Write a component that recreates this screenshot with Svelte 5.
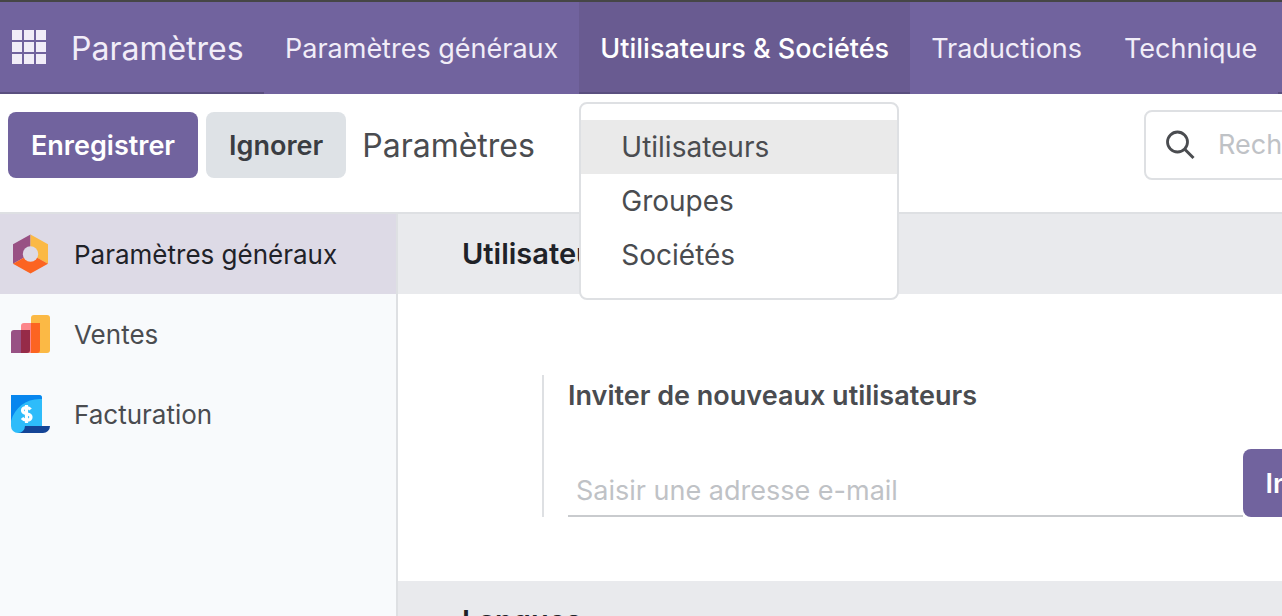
<script lang="ts">
  const menus = ["Paramètres généraux", "Utilisateurs & Sociétés", "Traductions", "Technique"];
  const entries = ["Utilisateurs", "Groupes", "Sociétés"];
  const tabs = [
    { id: "general", label: "Paramètres généraux" },
    { id: "sales", label: "Ventes" },
    { id: "invoicing", label: "Facturation" }
  ];

  let openMenu = $state("Utilisateurs & Sociétés");
  let hovered = $state("Utilisateurs");
  let activeTab = $state("general");
  let search = $state("");
  let email = $state("");

  const toggle = (menu: string) => {
    openMenu = openMenu === menu ? "" : menu;
  };
</script>

<div class="app">
  <header class="navbar">
    <div class="brand">
      <button class="apps" aria-label="Applications">
        <svg width="34" height="34" viewBox="0 0 34 34" fill="currentColor">
          {#each [0, 12, 24] as y}
            {#each [0, 12, 24] as x}
              <rect {x} {y} width="10" height="10" />
            {/each}
          {/each}
        </svg>
      </button>
      <a class="title" href="#settings">Paramètres</a>
    </div>
    {#each menus as menu}
      <div class="menu">
        <button class="menu-button" class:open={openMenu === menu} onclick={() => toggle(menu)}>{menu}</button>
        {#if openMenu === menu && menu === "Utilisateurs & Sociétés"}
          <div class="dropdown">
            {#each entries as entry}
              <a href="#{entry}" class="entry" class:hovered={hovered === entry} onmouseenter={() => (hovered = entry)}>{entry}</a>
            {/each}
          </div>
        {/if}
      </div>
    {/each}
    <div class="systray"></div>
  </header>

  <div class="control-panel">
    <button class="btn primary">Enregistrer</button>
    <button class="btn secondary">Ignorer</button>
    <h1>Paramètres</h1>
    <div class="search">
      <svg width="30" height="30" viewBox="0 0 30 30" fill="none" stroke="#4a4c50">
        <circle cx="11.500" cy="12" r="10" stroke-width="2.800" />
        <path d="M18.500 19L27.500 28" stroke-width="3" />
      </svg>
      <input type="text" placeholder="Recherche..." aria-label="Recherche" bind:value={search} />
    </div>
  </div>

  <div class="content">
    <nav class="sidebar">
      {#each tabs as tab}
        <button class="tab" class:active={activeTab === tab.id} onclick={() => (activeTab = tab.id)}>
          <svg width="40" height="40" viewBox="0 0 40 40">
            {#if tab.id === "general"}
              <path d="M20.500 .5L3 10.200V29.700L20.500 20Z" fill="#985184" />
              <path d="M20.500 .5L38 10.200V29.700L20.500 20Z" fill="#fbb945" />
              <path d="M3 29.700L20.500 20L38 29.700L20.500 39.500Z" fill="#fc6421" />
              <circle cx="20.500" cy="20" r="7.700" fill="#dddae6" />
            {:else if tab.id === "sales"}
              <path d="M21 4a3 3 0 0 1 3-3h13a3 3 0 0 1 3 3v32a3 3 0 0 1-3 3H21Z" fill="#fbb945" />
              <path d="M11 12a3 3 0 0 1 3-3h8v30H11Z" fill="#fc868b" />
              <path d="M21 9h9v27a3 3 0 0 1-3 3h-6Z" fill="#fc6421" />
              <path d="M1 19a3 3 0 0 1 3-3h8v23H1Z" fill="#985184" />
              <path d="M11 16h9v20a3 3 0 0 1-3 3h-6Z" fill="#962b48" />
            {:else}
              <path d="M1 1h28a3 3 0 0 1 3 3v28H15v7H8a7 7 0 0 1-7-7Z" fill="#2ebcfa" />
              <path d="M1 1h28a3 3 0 0 1 3 3v1C17 4 5 13 1 27Z" fill="#0886ee" />
              <path d="M15 32h25a7 7 0 0 1-7 7H8a7 7 0 0 0 7-7Z" fill="#144496" />
              <path
                d="M20.500 15.500c-1-1.500-2.300-2-4-2c-2.700 0-4 1.200-4 3c0 4.500 8.500 2 8.500 6.500c0 2-1.500 3.200-4.300 3.200c-2 0-3.500-.7-4.700-2.200M16.500 11v18"
                fill="none"
                stroke="#fff"
                stroke-width="3.200"
              />
            {/if}
          </svg>
          <span>{tab.label}</span>
        </button>
      {/each}
    </nav>

    <main>
      <h2>Utilisateurs</h2>
      <section class="settings">
        <div class="setting">
          <label for="email">Inviter de nouveaux utilisateurs</label>
          <div class="invite">
            <input type="email" id="email" placeholder="Saisir une adresse e-mail" bind:value={email} />
            <button class="btn primary">Inviter</button>
          </div>
        </div>
      </section>
      <h2>Langues</h2>
    </main>
  </div>
</div>

<style>
  :global(body) {
    overflow: hidden;
  }
  .app {
    display: flex;
    flex-direction: column;
    height: 100vh;
    overflow: hidden;
    background: #fff;
    color: #4a4c50;
    font-family: Inter, "Liberation Sans", sans-serif;
    font-size: 27px;
    line-height: 34px;
  }
  button,
  input {
    margin: 0;
    padding: 0;
    border: none;
    background: none;
    color: inherit;
    font: inherit;
    outline: none;
  }
  button {
    cursor: pointer;
    white-space: nowrap;
  }
  a {
    color: inherit;
    text-decoration: none;
  }
  svg {
    display: block;
    flex: none;
  }

  .navbar {
    display: flex;
    flex: none;
    height: 92px;
    border-top: 2px solid #464646;
    background: #71639e;
    color: #f1edf8;
  }
  .brand {
    display: flex;
    align-items: center;
    gap: 25px;
    box-sizing: border-box;
    width: 264px;
    flex: none;
    padding-left: 12px;
    border-bottom: 2px solid #5a4f7f;
  }
  .title {
    font-size: 32px;
    line-height: 38px;
    padding-top: 4px;
  }
  .menu {
    position: relative;
    display: flex;
    flex: none;
  }
  .menu-button {
    padding: 2px 21px 0;
  }
  .menu-button.open {
    background: #695b91;
    border-bottom: 2px solid #5a4f7f;
    padding-top: 4px;
    color: #fff;
    font-weight: 500;
  }
  .systray {
    flex: 1;
    border-bottom: 2px solid #5a4f7f;
  }
  .dropdown {
    position: absolute;
    top: 100%;
    left: 0;
    z-index: 10;
    box-sizing: border-box;
    width: 320px;
    margin-top: 8px;
    padding: 16px 0;
    border: 2px solid #dee0e3;
    border-radius: 8px;
    background: #fff;
    color: #4a4c50;
    font-size: 28px;
  }
  .entry {
    display: block;
    padding: 10px 40px;
  }
  .entry.hovered {
    background: #eaeaea;
  }

  .control-panel {
    display: flex;
    align-items: flex-start;
    gap: 8px;
    flex: none;
    box-sizing: border-box;
    height: 120px;
    padding: 16px 0 0 8px;
    border-bottom: 2px solid #dee0e3;
  }
  .btn {
    flex: none;
    height: 66px;
    margin-top: 2px;
    padding: 2px 23px 0;
    border-radius: 8px;
    font-weight: 600;
  }
  .primary {
    background: #71639e;
    color: #fff;
  }
  .secondary {
    background: #dee2e6;
    color: #3a3d42;
  }
  h1 {
    margin: 0 0 0 8px;
    font-size: 32px;
    font-weight: 400;
    line-height: 72px;
  }
  .search {
    display: flex;
    align-items: center;
    gap: 22px;
    box-sizing: border-box;
    flex: none;
    width: 480px;
    height: 70px;
    margin-left: auto;
    margin-right: -342px;
    padding-left: 20px;
    border: 2px solid #dee0e3;
    border-radius: 8px;
  }
  input::placeholder {
    color: #bfc2c6;
    opacity: 1;
  }

  .content {
    display: flex;
    flex: 1;
    min-height: 0;
  }
  .sidebar {
    flex: none;
    width: 396px;
    border-right: 2px solid #dee0e3;
    background: #f8fafc;
  }
  .tab {
    display: flex;
    align-items: center;
    gap: 24px;
    width: 100%;
    height: 80px;
    padding-left: 10px;
    font-size: 26px;
  }
  .tab span {
    padding-top: 2px;
  }
  .tab.active {
    background: #dddae6;
    color: #1f2228;
  }

  main {
    flex: 1;
    min-width: 0;
    overflow: hidden;
  }
  h2 {
    margin: 0;
    padding: 0 64px;
    background: #e9eaed;
    color: #1f2228;
    font-size: 29px;
    font-weight: 600;
    line-height: 80px;
  }
  .settings {
    padding: 81px 0 64px 144px;
  }
  .setting {
    display: flex;
    flex-direction: column;
    gap: 32px;
    padding-left: 24px;
    border-left: 2px solid #dee0e3;
  }
  label {
    font-weight: 600;
    line-height: 42px;
  }
  .invite {
    display: flex;
    align-items: flex-end;
    margin-right: -89px;
  }
  .invite input {
    flex: 1;
    min-width: 0;
    height: 50px;
    padding-left: 8px;
    border-bottom: 2px solid #c9cbce;
  }
  .invite .btn {
    height: 68px;
    margin: 0;
  }
</style>
